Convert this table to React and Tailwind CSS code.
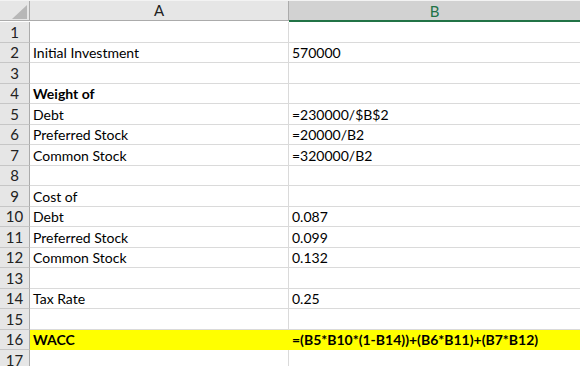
const ROWS = [
  { a: "", b: "" },
  { a: "Initial Investment", b: "570000" },
  { a: "", b: "" },
  { a: "Weight of", b: "", bold: true },
  { a: "Debt", b: "=230000/$B$2" },
  { a: "Preferred Stock", b: "=20000/B2" },
  { a: "Common Stock", b: "=320000/B2" },
  { a: "", b: "" },
  { a: "Cost of", b: "" },
  { a: "Debt", b: "0.087" },
  { a: "Preferred Stock", b: "0.099" },
  { a: "Common Stock", b: "0.132" },
  { a: "", b: "" },
  { a: "Tax Rate", b: "0.25" },
  { a: "", b: "" },
  { a: "WACC", b: "=(B5*B10*(1-B14))+(B6*B11)+(B7*B12)", bold: true, highlight: true },
  { a: "", b: "" },
];

export default function App() {
  return (
    <div className="h-[366px] w-[580px] overflow-hidden bg-white font-['Lato','Liberation_Sans',sans-serif] text-[14px] text-black">
      <div className="flex h-[22px] border-t border-[#f3f3f3] text-[15px]">
        <div className="relative h-[20px] w-[30px] shrink-0 border-b border-r border-[#ababab] bg-[#e6e6e6]">
          <svg className="absolute left-[12px] top-[4px]" width="15" height="14" viewBox="0 0 15 14">
            <polygon points="15,0 15,14 0,14" fill="#b7b7b7" />
          </svg>
        </div>
        <div className="flex h-[20px] w-[259px] shrink-0 items-center justify-center border-b border-r border-[#ababab] bg-[#e6e6e6] text-[#222]">
          A
        </div>
        <div className="flex h-[21px] flex-1 items-center justify-center border-b-2 border-[#217346] bg-[#d2d2d2] pt-px text-[#217346]">
          B
        </div>
      </div>
      {ROWS.map((row, i) => (
        <div key={i} className={`flex ${i % 2 === 0 ? "h-[21px]" : "h-[20px]"}`}>
          <div className="flex w-[30px] shrink-0 items-center justify-center border-b border-r border-[#c6c6c6] border-r-[#ababab] bg-[#e6e6e6] text-[15px] text-[#222]">
            {i + 1}
          </div>
          <div
            className={`flex w-[259px] shrink-0 items-center border-b border-r pl-[3px] ${
              row.highlight ? "border-[#ffff00] bg-[#ffff00]" : "border-[#dadada]"
            } ${row.bold ? "font-bold" : ""}`}
          >
            {row.a}
          </div>
          <div
            className={`flex flex-1 items-center border-b pl-[3px] ${
              row.highlight ? "border-[#ffff00] bg-[#ffff00]" : "border-[#dadada]"
            } ${row.bold ? "font-bold" : ""}`}
          >
            {row.b}
          </div>
        </div>
      ))}
    </div>
  );
}
